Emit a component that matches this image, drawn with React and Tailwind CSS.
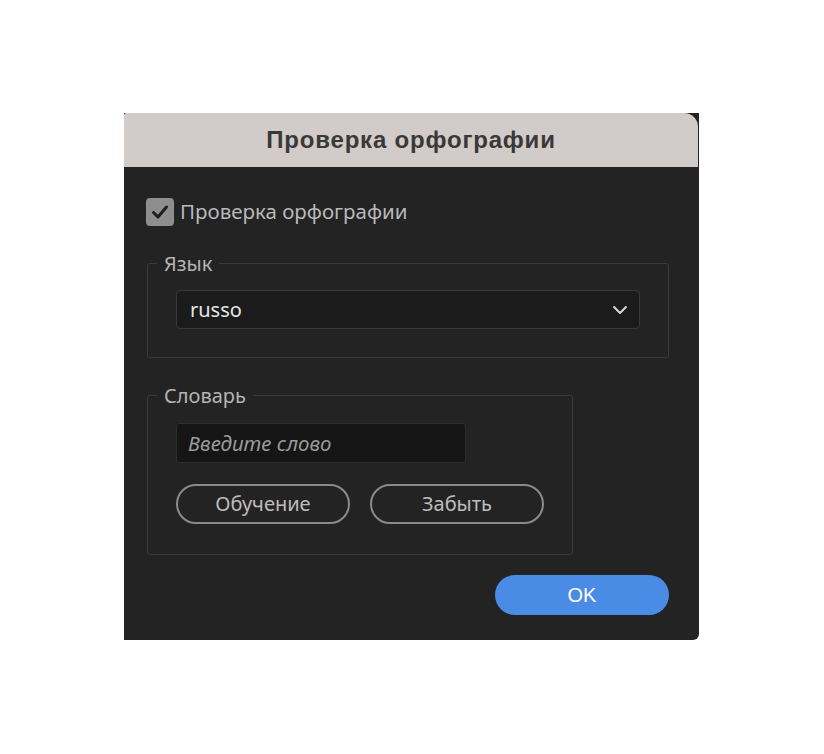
import React from "react";

export default function App() {
  const body = { fontFamily: '"Noto Sans", "Open Sans", sans-serif' };
  return (
    <div className="w-[824px] h-[754px] bg-white pt-[113px] pl-[124px]">
      <div className="w-[575px] h-[527px] bg-[#232323] flex flex-col rounded-br-[6px]" style={body}>
        <div className="h-[54px] w-[574px] bg-[#d1cbca] rounded-tr-[14px] rounded-tl-[2px] flex items-center justify-center">
          <span className="text-[24px] font-bold text-[#3a3838] tracking-[0.8px]" style={{ fontFamily: '"Liberation Sans", Arial, sans-serif' }}>
            Проверка орфографии
          </span>
        </div>
        <div className="flex flex-col pl-[22px] pr-[30px] pt-[30px]">
          <label className="flex items-center gap-[6px] h-[29px]">
            <span className="w-[28px] h-[28px] rounded-[4px] bg-[#8e8e8e] flex items-center justify-center">
              <svg width="20" height="20" viewBox="0 0 20 20" fill="none">
                <path d="M3.5 10.5 L8 15 L16.5 5" stroke="#1e1e1e" strokeWidth="3" strokeLinecap="round" strokeLinejoin="round" />
              </svg>
            </span>
            <span className="text-[20.5px] text-[#b9b9b9] leading-none">Проверка орфографии</span>
          </label>

          <fieldset className="mt-[24px] ml-[1px] w-[522px] border border-[#3a3a3a] rounded-[3px]">
            <legend className="ml-[9px] px-[7px] text-[20px] text-[#b4b4b4] leading-[27px]">Язык</legend>
            <div className="px-[28px] pb-[28px]">
              <div className="mt-[13px] h-[39px] bg-[#1b1b1b] border border-[#383838] rounded-[4px] flex items-center justify-between pl-[13px] pr-[11px]">
                <span className="text-[20px] text-[#e6e6e6]">russo</span>
                <svg width="16" height="10" viewBox="0 0 16 10" fill="none">
                  <path d="M2 2 L8 8 L14 2" stroke="#d8d8d8" strokeWidth="2" strokeLinecap="round" strokeLinejoin="round" />
                </svg>
              </div>
            </div>
          </fieldset>

          <fieldset className="mt-[24px] ml-[1px] w-[423px] border border-[#3a3a3a] rounded-[3px]">
            <legend className="ml-[9px] px-[7px] text-[20px] text-[#b4b4b4] leading-[27px]">Словарь</legend>
            <div className="px-[28px] pb-[30px]">
              <div className="mt-[14px] w-[290px] h-[40px] bg-[#151515] border border-[#2e2e2e] rounded-[3px] flex items-center pl-[11px]">
                <span className="text-[20.5px] italic text-[#9a9a9a]">Введите слово</span>
              </div>
              <div className="mt-[21px] flex gap-[20px]">
                <button className="w-[174px] h-[40px] rounded-full border-2 border-[#8a8a8a] text-[20px] text-[#bdbdbd] flex items-center justify-center">
                  Обучение
                </button>
                <button className="w-[174px] h-[40px] rounded-full border-2 border-[#8a8a8a] text-[20px] text-[#bdbdbd] flex items-center justify-center">
                  Забыть
                </button>
              </div>
            </div>
          </fieldset>

          <div className="mt-[20px] flex justify-end">
            <button className="w-[174px] h-[40px] rounded-full bg-[#4a8be6] text-[20px] text-white flex items-center justify-center" style={{ fontFamily: '"Liberation Sans", Arial, sans-serif' }}>
              OK
            </button>
          </div>
        </div>
      </div>
    </div>
  );
}
